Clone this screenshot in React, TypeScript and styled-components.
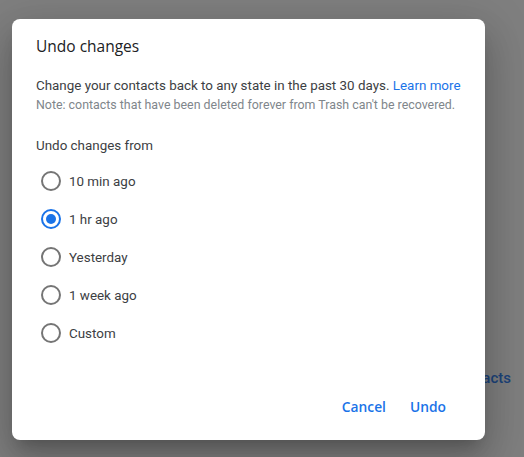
import React, { useState } from 'react';
import styled, { createGlobalStyle } from 'styled-components';

const GlobalStyle = createGlobalStyle`
  html, body {
    margin: 0;
    padding: 0;
    background: #7f7f7f;
    font-family: Roboto, "Liberation Sans", Arial, sans-serif;
    -webkit-font-smoothing: antialiased;
  }
`;

const Page = styled.div`
  position: relative;
  height: 457px;
  overflow: hidden;
`;

const BehindLink = styled.div`
  position: absolute;
  right: 13px;
  top: 369px;
  font-size: 15px;
  font-weight: 500;
  color: #1c437a;
  z-index: 0;
`;

const Dialog = styled.div`
  position: relative;
  z-index: 1;
  margin: 19px 0 0 12px;
  width: 473px;
  height: 421px;
  box-sizing: border-box;
  background: #fff;
  border-radius: 8px;
  display: flex;
  flex-direction: column;
  box-shadow: 0 24px 38px 3px rgba(0, 0, 0, 0.14), 0 9px 46px 8px rgba(0, 0, 0, 0.12),
    0 11px 15px -7px rgba(0, 0, 0, 0.2);
`;

const Content = styled.div`
  flex: 1;
  padding: 15px 24px 0 24px;
  display: flex;
  flex-direction: column;
`;

const Title = styled.h2`
  margin: 0;
  font-family: "Open Sans", Roboto, sans-serif;
  font-size: 15.5px;
  font-weight: 400;
  line-height: 24px;
  color: #202124;
`;

const Description = styled.p`
  margin: 18px 0 0;
  font-size: 13.4px;
  line-height: 20px;
  color: #3c4043;
  white-space: nowrap;
`;

const LearnMore = styled.a`
  color: #1a73e8;
  text-decoration: none;
`;

const Note = styled.p`
  margin: 1px 0 0;
  font-size: 12.4px;
  line-height: 16px;
  color: #80868b;
  white-space: nowrap;
`;

const SectionLabel = styled.div`
  margin-top: 23px;
  font-size: 13.4px;
  line-height: 20px;
  color: #3c4043;
`;

const RadioList = styled.div`
  margin-top: 6px;
  display: flex;
  flex-direction: column;
`;

const RadioRow = styled.label`
  display: flex;
  align-items: center;
  height: 38px;
  padding-left: 5px;
  gap: 8px;
  cursor: pointer;
  font-size: 13.4px;
  color: #3c4043;
`;

const RadioCircle = styled.span<{ $checked: boolean }>`
  width: 20px;
  height: 20px;
  box-sizing: border-box;
  border-radius: 50%;
  border: 2px solid ${(p) => (p.$checked ? '#1a73e8' : '#757575')};
  display: flex;
  align-items: center;
  justify-content: center;

  &::after {
    content: '';
    width: 10px;
    height: 10px;
    border-radius: 50%;
    background: #1a73e8;
    display: ${(p) => (p.$checked ? 'block' : 'none')};
  }
`;

const Actions = styled.div`
  display: flex;
  justify-content: flex-end;
  gap: 8px;
  padding: 0 31px 16px 0;
`;

const TextButton = styled.button`
  height: 36px;
  padding: 0 8px;
  border: none;
  background: none;
  font-family: "Open Sans", Roboto, sans-serif;
  font-size: 13.8px;
  font-weight: 600;
  color: #1a73e8;
  cursor: pointer;
`;

const options = ['10 min ago', '1 hr ago', 'Yesterday', '1 week ago', 'Custom'];

export default function App() {
  const [selected, setSelected] = useState('1 hr ago');

  return (
    <Page>
      <GlobalStyle />
      <BehindLink>Restore contacts</BehindLink>
      <Dialog>
        <Content>
          <Title>Undo changes</Title>
          <Description>
            Change your contacts back to any state in the past 30 days.{' '}
            <LearnMore href="#">Learn more</LearnMore>
          </Description>
          <Note>Note: contacts that have been deleted forever from Trash can't be recovered.</Note>
          <SectionLabel>Undo changes from</SectionLabel>
          <RadioList>
            {options.map((opt) => (
              <RadioRow key={opt} onClick={() => setSelected(opt)}>
                <RadioCircle $checked={selected === opt} />
                {opt}
              </RadioRow>
            ))}
          </RadioList>
        </Content>
        <Actions>
          <TextButton>Cancel</TextButton>
          <TextButton>Undo</TextButton>
        </Actions>
      </Dialog>
    </Page>
  );
}
